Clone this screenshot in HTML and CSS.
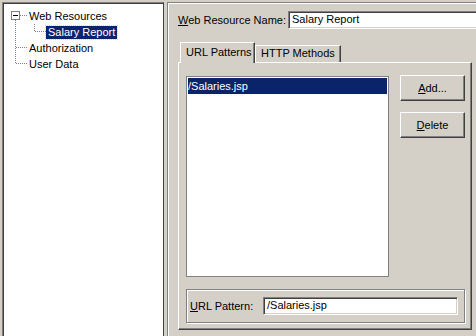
FILE: index.html
```html
<!DOCTYPE html>
<html lang="en">
<head>
    <meta charset="UTF-8">
    <title>Web Resources</title>
    <link rel="stylesheet" href="styles.css">
</head>
<body>
    <div class="app">
        <!-- Tree -->
        <div class="tree-pane">
            <svg class="tree-lines" width="160" height="80" viewBox="0 0 160 80">
                <rect x="6.5" y="6.5" width="8" height="8" fill="#fff" stroke="#808080"/>
                <line x1="8" y1="10.5" x2="13" y2="10.5" stroke="#000"/>
                <g stroke="#808080" stroke-dasharray="1 1">
                    <line x1="15" y1="10.5" x2="23" y2="10.5"/>
                    <line x1="10.5" y1="15" x2="10.5" y2="59"/>
                    <line x1="11" y1="42.5" x2="23" y2="42.5"/>
                    <line x1="11" y1="58.5" x2="23" y2="58.5"/>
                    <line x1="29.5" y1="19" x2="29.5" y2="27"/>
                    <line x1="30" y1="26.5" x2="42" y2="26.5"/>
                </g>
            </svg>
            <div class="tree-list">
                <div class="tree-row">Web Resources</div>
                <div class="tree-row child"><span class="selected">Salary Report</span></div>
                <div class="tree-row">Authorization</div>
                <div class="tree-row">User Data</div>
            </div>
        </div>

        <!-- Detail -->
        <div class="detail">
            <div class="name-row">
                <label class="name-label"><u>W</u>eb Resource Name:</label>
                <div class="field name-field">Salary Report</div>
            </div>

            <div class="tabs">
                <div class="tab active">URL Patterns</div>
                <div class="tab">HTTP Methods</div>
            </div>
            <div class="tab-pane">
                <div class="pattern-row">
                    <div class="pattern-list">
                        <div class="pattern-item">/Salaries.jsp</div>
                    </div>
                    <div class="list-buttons">
                        <button><u>A</u>dd...</button>
                        <button><u>D</u>elete</button>
                    </div>
                </div>
                <div class="pattern-group">
                    <label class="pattern-label"><u>U</u>RL Pattern:</label>
                    <div class="field pattern-field">/Salaries.jsp</div>
                </div>
            </div>
        </div>
    </div>
</body>
</html>
```

FILE: styles.css
```css
html, body {
    margin: 0;
    padding: 0;
    height: 100%;
    overflow: hidden;
    background: #d4d0c8;
    font-family: "Liberation Sans", Arial, sans-serif;
    font-size: 11px;
    color: #000;
}
.app {
    display: flex;
    height: 336px;
}
.tree-pane {
    position: relative;
    width: 160px;
    margin: 2px 0 0 2px;
    background: #fff;
    border-top: 1px solid #808080;
    border-left: 1px solid #808080;
    border-right: 1px solid #404040;
    box-shadow: inset 1px 1px 0 #404040;
    flex-shrink: 0;
}
.tree-lines {
    position: absolute;
    left: 2px;
    top: 2px;
}
.tree-list {
    padding: 5px 0 0 26px;
}
.tree-row {
    height: 16px;
    line-height: 16px;
    white-space: nowrap;
}
.tree-row.child {
    padding-left: 17px;
}
.selected {
    display: inline-block;
    line-height: 13px;
    padding: 0 2px;
    background: #0a246a;
    color: #fff;
    outline: 1px dotted #f0e060;
}
.detail {
    flex: 1;
    margin-left: 3px;
    margin-top: 2px;
    border-left: 1px solid #808080;
    border-top: 1px solid #808080;
    box-shadow: inset 1px 1px 0 #fff;
    padding: 8px 0 0 10px;
    overflow: hidden;
}
.name-row {
    display: flex;
    align-items: center;
    height: 18px;
}
.name-label {
    width: 110px;
    flex-shrink: 0;
    white-space: nowrap;
}
.field {
    box-sizing: border-box;
    height: 18px;
    line-height: 14px;
    padding: 0 3px;
    background: #fff;
    border-top: 1px solid #808080;
    border-left: 1px solid #808080;
    border-right: 1px solid #fff;
    border-bottom: 1px solid #fff;
    box-shadow: inset 1px 1px 0 #404040, inset -1px -1px 0 #d4d0c8;
    white-space: nowrap;
}
.name-field {
    width: 200px;
    flex-shrink: 0;
}
.tabs {
    display: flex;
    align-items: flex-end;
    margin-top: 13px;
    height: 20px;
    position: relative;
    z-index: 1;
}
.tab {
    box-sizing: border-box;
    height: 17px;
    line-height: 15px;
    padding: 0 5px;
    border-top: 1px solid #fff;
    border-left: 1px solid #fff;
    border-right: 1px solid #404040;
    box-shadow: inset -1px 0 0 #808080;
    background: #d4d0c8;
    white-space: nowrap;
}
.tab.active {
    height: 21px;
    margin-left: 2px;
    margin-bottom: -1px;
    width: 75px;
    padding-top: 2px;
}
.tab-pane {
    box-sizing: border-box;
    width: 294px;
    height: 268px;
    border-top: 1px solid #fff;
    border-left: 1px solid #fff;
    border-right: 1px solid #404040;
    border-bottom: 1px solid #404040;
    box-shadow: inset -1px -1px 0 #808080;
    padding: 13px 0 0 7px;
}
.pattern-row {
    display: flex;
    align-items: flex-start;
}
.pattern-list {
    box-sizing: border-box;
    width: 203px;
    height: 201px;
    background: #fff;
    border: 1px solid #808080;
    padding: 1px;
}
.pattern-item {
    height: 16px;
    line-height: 16px;
    background: #0a246a;
    color: #fff;
}
.list-buttons {
    display: flex;
    flex-direction: column;
    gap: 11px;
    margin-left: 11px;
    margin-top: -1px;
}
button {
    box-sizing: border-box;
    width: 65px;
    height: 26px;
    padding: 0;
    font-family: inherit;
    font-size: 11px;
    color: #000;
    background: #d4d0c8;
    border-top: 1px solid #fff;
    border-left: 1px solid #fff;
    border-right: 1px solid #404040;
    border-bottom: 1px solid #404040;
    box-shadow: inset -1px -1px 0 #808080;
}
.pattern-group {
    box-sizing: border-box;
    display: flex;
    align-items: center;
    width: 279px;
    height: 34px;
    margin-top: 12px;
    border: 1px solid #808080;
    box-shadow: inset 1px 1px 0 #fff, 1px 1px 0 #fff;
    padding-left: 3px;
}
.pattern-label {
    width: 73px;
    flex-shrink: 0;
    white-space: nowrap;
}
.pattern-field {
    width: 195px;
}
```
